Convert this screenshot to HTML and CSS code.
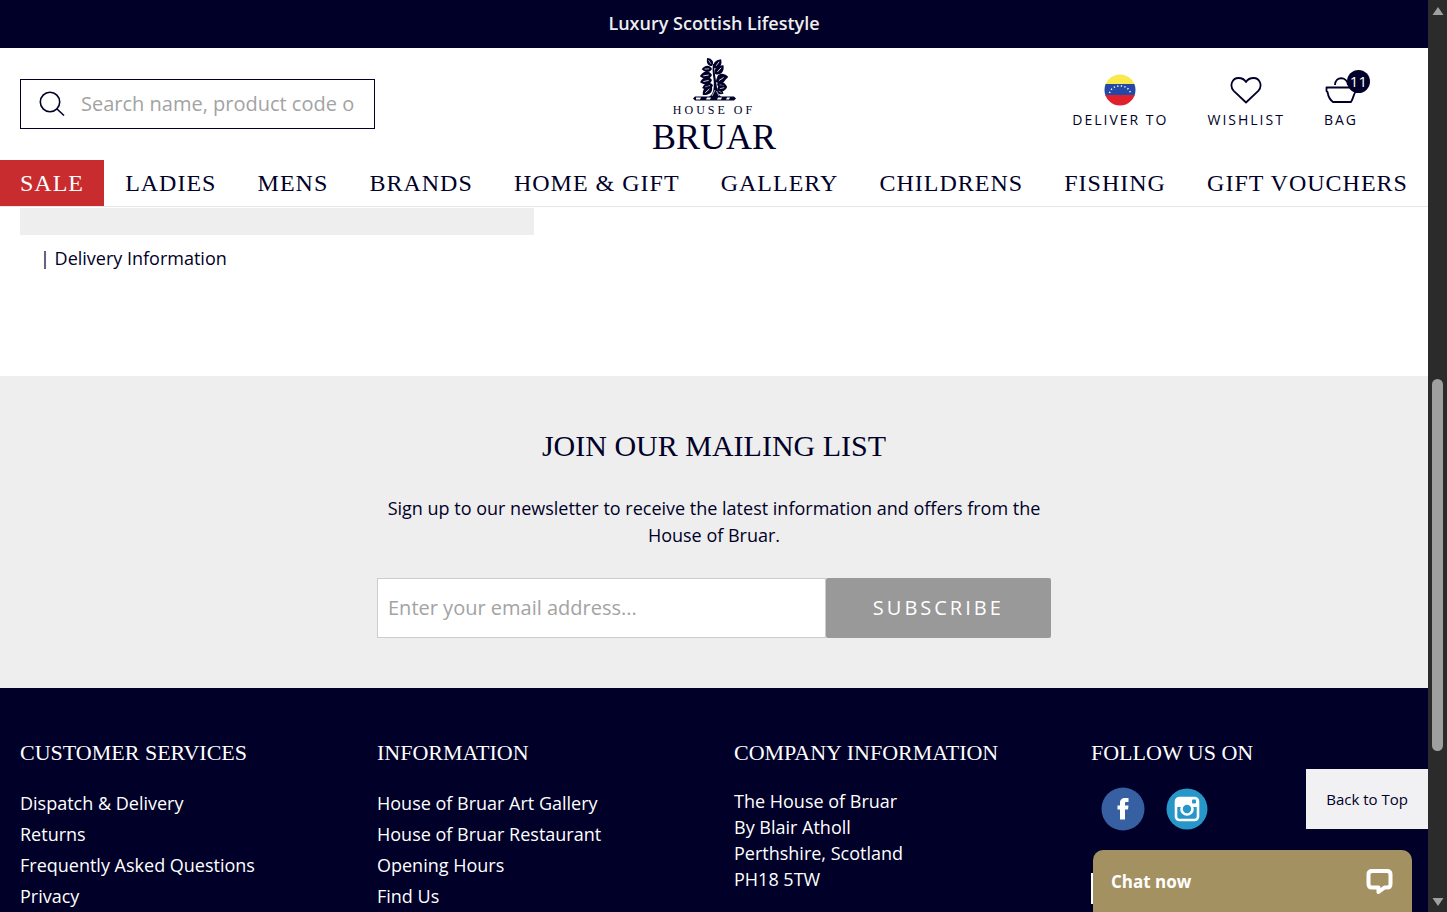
FILE: index.html
```html
<!DOCTYPE html>
<html lang="en">
<head>
<meta charset="utf-8">
<title>House of Bruar</title>
<link rel="stylesheet" href="styles.css">
</head>
<body>
<div class="page">
  <div class="promo">Luxury Scottish Lifestyle</div>
  <header class="header">
    <form class="search">
      <label for="search" aria-label="Search">
        <svg width="26" height="26" viewBox="0 0 26 26" fill="none" stroke="#000028" stroke-width="1.6"><circle cx="11" cy="11" r="9.7"/><path d="M18 18l7 6.500"/></svg>
      </label>
      <input id="search" type="text" placeholder="Search name, product code or brand">
    </form>
    <a class="logo" href="#" aria-label="House of Bruar">
      <svg width="46" height="46" viewBox="0 0 46 46" fill="#000028">
        <defs><g id="leaf"><path d="M0 0C1-4 4.500-5 9-2.600C7.500 2 3 3.600 0 0Z"/><path d="M2.500-.5L6.500-1.800" stroke="#fff" stroke-width=".6"/></g></defs>
        <path d="M22 8C20.500 18 24 24 22.500 33C22 37 20.500 40 16 42H32C28 40 27 37 26 32C25 23 23.500 18 23 8Z"/>
        <use href="#leaf" transform="translate(21 10) rotate(-105)"/>
        <use href="#leaf" transform="translate(21 13) rotate(-165) scale(1.100)"/>
        <use href="#leaf" transform="translate(23 12) rotate(-35) scale(1.200)"/>
        <use href="#leaf" transform="translate(21 19) rotate(-170) scale(1.300)"/>
        <use href="#leaf" transform="translate(24 18) rotate(-30) scale(1.300)"/>
        <use href="#leaf" transform="translate(26 21) rotate(15) scale(1.200)"/>
        <use href="#leaf" transform="translate(21 24) rotate(-175) scale(1.300)"/>
        <use href="#leaf" transform="translate(25 26) rotate(-15) scale(1.300)"/>
        <use href="#leaf" transform="translate(22 29) rotate(180) scale(1.200)"/>
        <use href="#leaf" transform="translate(26 28) rotate(30) scale(1.100)"/>
        <use href="#leaf" transform="translate(21 31) rotate(155) scale(1.300)"/>
        <use href="#leaf" transform="translate(26 33) rotate(5) scale(1.100)"/>
        <use href="#leaf" transform="translate(26 34) rotate(45) scale(.8)"/>
        <path d="M24 34L21 40M25.500 35L28 40" stroke="#fff" stroke-width=".7"/>
        <path d="M4 40.500H43L45 42.500L43 44.500H4L2 42.500Z"/>
        <path d="M5 41.500H10L9 43.500H5ZM16 41.500H20L19 43.500H15ZM27 41.500H31L30 43.500H26ZM36 41.500H39L38 43.500H35Z" fill="#fff"/>
      </svg>
      <span class="logo-small">HOUSE OF</span>
      <span class="logo-big">BRUAR</span>
    </a>
    <div class="actions">
      <a class="action" href="#">
        <svg width="32" height="32" viewBox="0 0 32 32"><defs><clipPath id="disc"><circle cx="16" cy="16" r="15.500"/></clipPath></defs><g clip-path="url(#disc)"><path fill="#fbe94c" d="M0 0h32v11H0z"/><path fill="#2348a6" d="M0 10h32v12H0z"/><path fill="#e0202c" d="M0 21h32v11H0z"/></g><path d="M5.500 19C8 9.500 24 9.500 26.500 19" fill="none" stroke="#fff" stroke-width="1.500" stroke-dasharray="1.300 2.300"/></svg>
        <span>DELIVER TO</span>
      </a>
      <a class="action" href="#">
        <svg width="32" height="32" viewBox="0 0 32 32" fill="none" stroke="#000028" stroke-width="1.800" stroke-linejoin="round"><path d="M16 28.500L3.700 16.800C-.8 11.800 2 4 8.500 4C12 4 14.500 5.500 16 8C17.500 5.500 20 4 23.500 4C30 4 32.800 11.800 28.300 16.800Z"/></svg>
        <span>WISHLIST</span>
      </a>
      <a class="action" href="#">
        <svg width="32" height="32" viewBox="0 0 32 32" fill="none" stroke="#000028" stroke-width="1.800" stroke-linejoin="round"><path d="M1.500 13.500H30.500V18C29 19 28.500 24 26 28H8C4.500 25.500 3 21 2.500 18L1.500 17ZM10 11C10 2 22 2 23 11"/></svg>
        <span>BAG</span>
        <b class="badge">11</b>
      </a>
    </div>
  </header>
  <nav class="nav">
    <a class="sale" href="#">SALE</a><a href="#">LADIES</a><a href="#">MENS</a><a href="#">BRANDS</a><a href="#">HOME &amp; GIFT</a><a href="#">GALLERY</a><a href="#">CHILDRENS</a><a href="#">FISHING</a><a href="#">GIFT VOUCHERS</a>
  </nav>
  <main class="content">
    <div class="panel"></div>
    <p class="delivery">| <a href="#">Delivery Information</a></p>
  </main>
  <section class="mailing">
    <h2>JOIN OUR MAILING LIST</h2>
    <p>Sign up to our newsletter to receive the latest information and offers from the House of Bruar.</p>
    <form class="signup">
      <input type="email" aria-label="Email address" placeholder="Enter your email address...">
      <button type="button">SUBSCRIBE</button>
    </form>
  </section>
  <footer class="footer">
    <div>
      <h3>CUSTOMER SERVICES</h3>
      <ul><li><a href="#">Dispatch &amp; Delivery</a></li><li><a href="#">Returns</a></li><li><a href="#">Frequently Asked Questions</a></li><li><a href="#">Privacy</a></li></ul>
    </div>
    <div>
      <h3>INFORMATION</h3>
      <ul><li><a href="#">House of Bruar Art Gallery</a></li><li><a href="#">House of Bruar Restaurant</a></li><li><a href="#">Opening Hours</a></li><li><a href="#">Find Us</a></li></ul>
    </div>
    <div>
      <h3>COMPANY INFORMATION</h3>
      <address>The House of Bruar<br>By Blair Atholl<br>Perthshire, Scotland<br>PH18 5TW</address>
    </div>
    <div>
      <h3>FOLLOW US ON</h3>
      <div class="social">
        <a href="#" aria-label="Facebook"><svg width="44" height="44" viewBox="0 0 44 44"><circle cx="22" cy="22" r="21.500" fill="#3760a3"/><path fill="#fff" d="M19 32.500V22.500H16.500V18.500H19V16C19 12.500 21 11 24 11H27.500V15H25.200C24.200 15 24 15.500 24 16.400V18.500H27.500L27 22.500H24V32.500Z"/></svg></a>
        <a href="#" aria-label="Instagram"><svg width="44" height="44" viewBox="0 0 44 44"><circle cx="22" cy="22" r="20.500" fill="#2796c8"/><rect x="11" y="11" width="22" height="22" rx="3.500" fill="none" stroke="#fff" stroke-width="2.600"/><path d="M11 12H33V20H28A7 7 0 0 0 16 20H11Z" fill="#fff"/><circle cx="22" cy="22" r="5.500" fill="#2796c8" stroke="#fff" stroke-width="2.600"/><rect x="27" y="12.500" width="4" height="4" rx="1" fill="#2796c8"/></svg></a>
      </div>
      <div class="card"></div>
    </div>
  </footer>
  <a class="to-top" href="#">Back to Top</a>
  <button class="chat" type="button">Chat now
    <svg width="28" height="28" viewBox="0 0 28 28"><path d="M6 4H21Q24.500 4 24.500 7.500V17Q24.500 20.500 21 20.500H18.500L12.500 25V20.500H6Q2.500 20.500 2.500 17V7.500Q2.500 4 6 4Z" fill="none" stroke="#fff" stroke-width="4" stroke-linejoin="round"/></svg>
  </button>
</div>
<div class="scrollbar">
  <svg width="12" height="10" viewBox="0 0 12 10"><path d="M6 1L11.500 9H.5Z" fill="#a0a0a0"/></svg>
  <div class="track"><div class="thumb"></div></div>
  <svg width="12" height="10" viewBox="0 0 12 10"><path d="M6 9L.5 1H11.500Z" fill="#a0a0a0"/></svg>
</div>
</body>
</html>
```
FILE: styles.css
```css
* { box-sizing: border-box; }
body {
  margin: 0;
  height: 100vh;
  display: flex;
  overflow: hidden;
  font: 18px/27px "Open Sans", sans-serif;
  color: #000028;
  background: #fff;
}
a { color: inherit; text-decoration: none; }
h2, h3, p, ul { margin: 0; padding: 0; font-weight: 400; }
ul { list-style: none; }
svg { display: block; flex: none; }

.page {
  position: relative;
  flex: 1;
  min-width: 0;
  display: flex;
  flex-direction: column;
  overflow: hidden;
}
.page > * { flex-shrink: 0; }

.promo {
  height: 48px;
  line-height: 46px;
  text-align: center;
  font-weight: 600;
  color: #eee;
  background: #000028;
}

.header {
  height: 112px;
  padding: 0 70px 0 20px;
  display: grid;
  grid-template-columns: 1fr auto 1fr;
}
.search {
  width: 355px;
  height: 50px;
  margin-top: 31px;
  padding: 0 20px 0 18px;
  display: flex;
  align-items: center;
  gap: 16px;
  border: 1px solid #000028;
}
.search input {
  flex: 1;
  min-width: 0;
  padding: 0;
  border: 0;
  outline: 0;
  font: 20px/30px "Open Sans", sans-serif;
}
input::placeholder { color: #a3a3a3; opacity: 1; }

.logo {
  margin-left: 50px;
  padding-top: 8px;
  display: flex;
  flex-direction: column;
  align-items: center;
  font-family: "Liberation Serif", serif;
}
.logo-small { font-size: 12px; line-height: 16px; letter-spacing: 3px; }
.logo-big { font-size: 36px; line-height: 38px; }

.actions {
  justify-self: end;
  padding-top: 26px;
  display: flex;
  gap: 39px;
}
.action {
  position: relative;
  display: flex;
  flex-direction: column;
  align-items: center;
  font-size: 14px;
  line-height: 28px;
  letter-spacing: 2px;
}
.badge {
  position: absolute;
  left: 23px;
  top: -4px;
  width: 23px;
  height: 23px;
  border-radius: 50%;
  font-size: 15px;
  font-weight: 400;
  line-height: 23px;
  letter-spacing: 0;
  text-align: center;
  color: #fff;
  background: #000028;
}

.nav {
  display: flex;
  justify-content: space-between;
  border-bottom: 1px solid #e6e6e6;
  font: 24px/46px "Liberation Serif", serif;
  letter-spacing: 1px;
  white-space: nowrap;
}
.nav a { padding: 0 20px; }
.nav .sale { color: #fff; background: #c92c2f; }

.content { height: 169px; padding: 1px 20px 0; }
.panel { width: 37%; height: 27px; background: #eee; }
.delivery { padding: 10px 20px; }

.mailing {
  height: 312px;
  padding: 50px 20px;
  display: flex;
  flex-direction: column;
  align-items: center;
  text-align: center;
  background: #eee;
}
.mailing h2 { font: 30px/40px "Liberation Serif", serif; }
.mailing p { width: 50%; padding: 29px 20px; }
.signup { width: calc(50% - 20px); display: flex; height: 60px; }
.signup input {
  flex: 2;
  min-width: 0;
  padding: 0 10px;
  border: 1px solid #ccc;
  font: 20px/30px "Open Sans", sans-serif;
}
.signup button {
  flex: 1;
  border: 0;
  border-radius: 2px;
  font: 20px/30px "Open Sans", sans-serif;
  letter-spacing: 3px;
  color: #fff;
  background: #999;
}

.footer {
  flex: 1 0 auto;
  padding-top: 50px;
  display: grid;
  grid-template-columns: repeat(4, 1fr);
  color: #fff;
  background: #000028;
}
.footer > div { padding: 0 20px; }
.footer h3 { font: 22px/30px "Liberation Serif", serif; white-space: nowrap; }
.footer ul { padding-top: 20px; line-height: 31px; }
.footer address { padding-top: 20px; font-style: normal; line-height: 26px; }
.social { display: flex; gap: 20px; padding: 19px 10px 0; }
.card { width: 200px; height: 31px; margin-top: 42px; background: #fff; }

.to-top {
  position: absolute;
  right: 0;
  bottom: 83px;
  padding: 0 20px;
  font-size: 15px;
  line-height: 60px;
  background: #f1f1f3;
}
.chat {
  position: absolute;
  right: 16px;
  bottom: 0;
  width: 319px;
  height: 62px;
  padding: 0 18px;
  display: flex;
  align-items: center;
  justify-content: space-between;
  border: 0;
  border-radius: 10px 10px 0 0;
  font: 700 17px/27px "Open Sans", sans-serif;
  color: #fff;
  background: #a39161;
}

.scrollbar {
  width: 19px;
  padding: 6px 0 5px;
  display: flex;
  flex-direction: column;
  align-items: center;
  background: #2b2b2b;
}
.track { flex: 1; display: flex; flex-direction: column; }
.track::before { content: ""; flex: 363; }
.thumb { flex: 372; width: 11px; border-radius: 6px; background: #9f9f9f; }
.track::after { content: ""; flex: 146; }
```
